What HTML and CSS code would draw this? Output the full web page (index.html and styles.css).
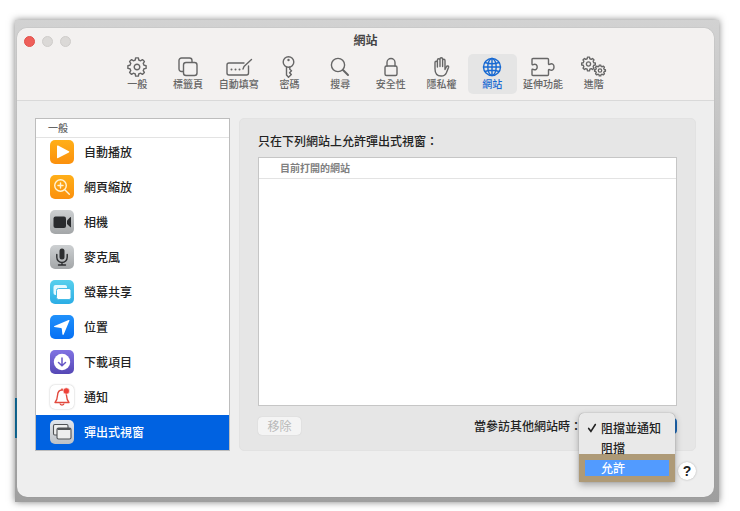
FILE: index.html
```html
<!DOCTYPE html>
<html lang="zh-Hant">
<head>
<meta charset="utf-8">
<meta name="viewport" content="width=device-width, initial-scale=1">
<title>網站</title>
<link rel="stylesheet" href="styles.css">
</head>
<body>
<svg class="defs" width="0" height="0" aria-hidden="true">
  <defs>
    <path id="gear" d="M7 -1.7 L9.1 -1.4 V1.4 L7 1.7 L6.2 3.7 L7.4 5.4 L5.4 7.4 L3.7 6.2 L1.7 7 L1.4 9.1 H-1.4 L-1.7 7 L-3.7 6.2 L-5.4 7.4 L-7.4 5.4 L-6.2 3.7 L-7 1.7 L-9.1 1.4 V-1.4 L-7 -1.7 L-6.2 -3.7 L-7.4 -5.4 L-5.4 -7.4 L-3.7 -6.2 L-1.7 -7 L-1.4 -9.1 H1.4 L1.7 -7 L3.7 -6.2 L5.4 -7.4 L7.4 -5.4 L6.2 -3.7 Z"/>
  </defs>
</svg>
<div class="backdrop">
  <main class="window">
    <header class="titlebar">
      <div class="title-row">
        <div class="lights">
          <button class="light close" aria-label="關閉"></button>
          <button class="light" aria-label="縮到最小"></button>
          <button class="light" aria-label="縮放"></button>
        </div>
        <h1 class="title">網站</h1>
      </div>
      <nav class="toolbar">
        <button class="tool">
          <svg class="tool-icon" viewBox="-14 -11 28 22"><use href="#gear"/><circle r="2.8"/></svg>
          <span>一般</span>
        </button>
        <button class="tool">
          <svg class="tool-icon" viewBox="0 0 28 22"><path d="M9 15.500H7.500a2.500 2.500 0 0 1-2.500-2.500V4.500a2.500 2.500 0 0 1 2.500-2.500h8A2.500 2.500 0 0 1 18 4.500v1.500"/><rect x="9.500" y="6.500" width="13.500" height="13" rx="2.500"/></svg>
          <span>標籤頁</span>
        </button>
        <button class="tool">
          <svg class="tool-icon" viewBox="0 0 28 22"><path d="M19 7H4a2 2 0 0 0-2 2v8a2 2 0 0 0 2 2h17.500a2 2 0 0 0 2-2V10"/><path d="M18 13l1-2.500 7.500-7"/><path class="dots" d="M6.500 13.500h0M10.500 13.500h0M14.500 13.500h0"/></svg>
          <span>自動填寫</span>
        </button>
        <button class="tool">
          <svg class="tool-icon" viewBox="0 0 28 22"><circle cx="13.500" cy="6" r="5.300"/><circle class="fill" cx="13.500" cy="4" r="1.200"/><path d="M11.500 11v8l2 2.300 2.800-2.800-1.700-1.800 1.900-2-1.700-1.500V11"/></svg>
          <span>密碼</span>
        </button>
        <button class="tool">
          <svg class="tool-icon" viewBox="0 0 28 22"><circle cx="12" cy="9" r="6.600"/><path class="thick" d="M17 14l5 5"/></svg>
          <span>搜尋</span>
        </button>
        <button class="tool">
          <svg class="tool-icon" viewBox="0 0 28 22"><rect x="8" y="10" width="12" height="9.500" rx="1.500"/><path d="M10 10V6.500a4 4 0 0 1 8 0V10"/></svg>
          <span>安全性</span>
        </button>
        <button class="tool">
          <svg class="tool-icon" viewBox="0 0 28 22"><path d="M7 13V6.500a1.200 1.200 0 0 1 2.400 0V11 4a1.300 1.300 0 0 1 2.600 0v6.500V3a1.300 1.300 0 0 1 2.600 0V10.500 4.500a1.200 1.200 0 0 1 2.400 0V13.500l1.400-2.800c.6-1.300 2.600-.8 2.200.6l-2.200 5.400c-1 2.300-2.700 3.300-5.200 3.300-4 0-6.200-2.500-6.200-7z"/></svg>
          <span>隱私權</span>
        </button>
        <button class="tool selected" aria-current="page">
          <svg class="tool-icon" viewBox="0 0 28 22"><circle cx="14" cy="11" r="8.500"/><ellipse cx="14" cy="11" rx="4.200" ry="8.500"/><path d="M14 2.500v17M5.500 11h17M7 6.500c4 1.500 10 1.500 14 0M7 15.500c4-1.500 10-1.500 14 0"/></svg>
          <span>網站</span>
        </button>
        <button class="tool">
          <svg class="tool-icon" viewBox="0 0 28 22"><path d="M4 2.500h14.500q1 0 1 1v4.200q0 1 1 .7c3-1.500 4.500.2 4.500 2.600s-1.500 4.100-4.500 2.600q-1-.3-1 .7v4.200q0 1-1 1H4q-1 0-1-1V14q0-1.200 1.200-.6c2.500 1.200 4-.4 4-2.400s-1.500-3.600-4-2.400Q3 9.200 3 8V3.500q0-1 1-1z"/></svg>
          <span>延伸功能</span>
        </button>
        <button class="tool">
          <svg class="tool-icon" viewBox="0 0 28 22"><g transform="translate(8.500 8) scale(.75)" stroke-width="1.800"><use href="#gear"/><circle r="2.800"/></g><g transform="translate(20 14.500) scale(.6)" stroke-width="2.200"><use href="#gear"/><circle r="2.800"/></g></svg>
          <span>進階</span>
        </button>
      </nav>
    </header>

    <div class="content">
      <aside class="sidebar">
        <h2 class="sidebar-head">一般</h2>
        <ul class="list">
          <li class="item"><span class="app orange"><svg viewBox="0 0 24 24"><path fill="#fff" d="M7 6.200q0-1.200 1.100-.6l10.800 5.600q1 .6 0 1.200L8.100 18q-1.100.6-1.100-.6z"/></svg></span>自動播放</li>
          <li class="item"><span class="app orange"><svg viewBox="0 0 24 24" fill="none" stroke="#fff4d6" stroke-width="1.400" stroke-linecap="round"><circle cx="10.500" cy="10.500" r="5.800"/><path d="M15 15l4.300 4.300M8 10.500h5M10.500 8v5"/></svg></span>網頁縮放</li>
          <li class="item"><span class="app gray"><svg viewBox="0 0 24 24" fill="#292b2e"><rect x="3.500" y="6.500" width="12.500" height="11.500" rx="2"/><path d="M17 10.500l3.200-3.200q.8-.6.800.4v9q0 1-.8.400L17 14z"/></svg></span>相機</li>
          <li class="item"><span class="app gray"><svg viewBox="0 0 24 24" fill="none" stroke="#2c2e30" stroke-width="1.400" stroke-linecap="round"><rect x="9.500" y="3.500" width="5" height="11" rx="2.500" fill="#2c2e30" stroke="none"/><path d="M6.800 9.500v2.800a5.200 5.200 0 0 0 10.400 0V9.500M12 17.500V20M8.500 20h7"/></svg></span>麥克風</li>
          <li class="item"><span class="app cyan"><svg viewBox="0 0 24 24"><rect x="3.500" y="5" width="13.500" height="10" rx="2" fill="#e5f9ff"/><rect x="6.500" y="8.500" width="14.500" height="11" rx="2" fill="#fff" stroke="#45bce7"/></svg></span>螢幕共享</li>
          <li class="item"><span class="app blue"><svg viewBox="0 0 24 24"><path fill="#fff" d="M4.300 12.100q-1-.7.200-1.200L18.600 5q1.200-.4.800.8l-5.600 13.500q-.8 1.200-1.400 0l-.6-5.500q0-.8-.9-.9z"/></svg></span>位置</li>
          <li class="item"><span class="app purple"><svg viewBox="0 0 24 24"><circle cx="12" cy="12" r="8.200" fill="#fff"/><path d="M12 8v7.500M8.500 12.500l3.500 3.200 3.500-3.200" fill="none" stroke="#6655c5" stroke-width="1.500" stroke-linecap="round"/></svg></span>下載項目</li>
          <li class="item"><span class="app white"><svg viewBox="0 0 24 24" fill="none" stroke="#e24a3e" stroke-width="1.400" stroke-linejoin="round"><path d="M5 17.500c2-2 2.300-3.500 2.500-7 .2-3.600 1.800-5.500 4.500-5.500s4.300 2 4.500 5.500c.2 3.500.5 5 2.500 7z"/><path d="M10 18.500c.3 2 3.700 2 4 0M12 5V3.500"/><circle cx="16.300" cy="6" r="3.200" fill="#ed4138" stroke="#fff" stroke-width=".6"/></svg></span>通知</li>
          <li class="item active"><span class="app silver"><svg viewBox="0 0 24 24" fill="#eee" stroke="#505255" stroke-width="1.100"><path d="M7 15H4.800Q3.500 15 3.500 13.500V6q0-1.500 1.300-1.500h12Q18 4.500 18 6v2"/><rect x="7" y="8" width="14" height="11" rx="1.500"/><path d="M7.500 9h13" stroke-width="2"/></svg></span>彈出式視窗</li>
        </ul>
      </aside>

      <section class="panel">
        <h2 class="panel-title">只在下列網站上允許彈出式視窗：</h2>
        <div class="sites"><h3 class="sites-head">目前打開的網站</h3></div>
        <div class="controls">
          <button class="remove" disabled>移除</button>
          <div class="policy">
            <label for="policy">當參訪其他網站時：</label>
            <div class="picker">
              <select id="policy" class="select"><option>阻擋並通知</option><option>阻擋</option><option>允許</option></select>
              <div class="menu" role="listbox" aria-label="當參訪其他網站時">
                <div class="option" role="option" aria-selected="true"><svg class="check" viewBox="0 0 12 12"><path d="M2 6.500L4.700 10 10 1.800" fill="none" stroke="#222" stroke-width="1.900" stroke-linecap="round"/></svg>阻擋並通知</div>
                <div class="option" role="option" aria-selected="false">阻擋</div>
                <div class="highlight"><div class="option hover" role="option" aria-selected="false">允許</div></div>
              </div>
            </div>
          </div>
        </div>
      </section>
    </div>
    <footer class="footer"><button class="help" aria-label="輔助說明">?</button></footer>
  </main>
</div>
</body>
</html>
```
FILE: styles.css
```css
* {
  box-sizing: border-box;
}

body {
  margin: 0;
  min-height: 100vh;
  padding: 20px 21px 9px 15px;
  display: flex;
  background: #fff;
  color: #222;
  font-family: "Noto Sans CJK TC", "Liberation Sans", sans-serif;
  font-size: 12px;
  line-height: 18px;
}

h1, h2, h3, ul {
  margin: 0;
  padding: 0;
}

button {
  padding: 0;
  border: 0;
  font: inherit;
  color: inherit;
}

.defs {
  position: absolute;
}

.backdrop {
  flex: 1;
  display: flex;
  padding: 8px 5px 5px 2px;
  background:
    linear-gradient(transparent 378px, #08608c 378px, #08608c 418px, transparent 418px) left / 2px 100% no-repeat,
    linear-gradient(#d2d2d2, #bcbcbc 35%, #9f9f9f);
  box-shadow: 0 0 7px rgba(0, 0, 0, .5);
}

.window {
  flex: 1;
  display: flex;
  flex-direction: column;
  border-radius: 10px;
  background: #eee;
  box-shadow: 0 0 1px #888;
}

.titlebar {
  height: 73px;
  border-bottom: 1px solid #d9d9d9;
  border-radius: 10px 10px 0 0;
  background: #f3f1f0;
}

.title-row {
  display: grid;
  grid-template-columns: 1fr auto 1fr;
  align-items: center;
  height: 26px;
  padding: 0 7px;
}

.lights {
  display: flex;
  gap: 7px;
}

.light {
  width: 11px;
  height: 11px;
  border: 1px solid #cfcdcb;
  border-radius: 50%;
  background: #dbd9d7;
}

.close {
  border-color: #e2504a;
  background: #ee5f5a;
}

.title {
  font-size: 12px;
  font-weight: 700;
  line-height: 16px;
  padding-bottom: 2px;
  color: #444;
}

.toolbar {
  display: grid;
  grid-template-columns: repeat(10, 1fr);
  justify-items: center;
  max-width: 507px;
  margin: 0 auto;
}

.tool {
  display: flex;
  flex-direction: column;
  align-items: center;
  width: 49px;
  height: 40px;
  padding-top: 2px;
  border-radius: 5px;
  background: none;
  color: #666;
  font-size: 10px;
  font-weight: 500;
  line-height: 12px;
  white-space: nowrap;
}

.selected {
  background: #e5e5e5;
  color: #1769d2;
}

.tool-icon {
  width: 28px;
  height: 22px;
  fill: none;
  stroke: currentColor;
  stroke-width: 1.4;
  stroke-linejoin: round;
  stroke-linecap: round;
}

.tool-icon .dots {
  stroke-width: 2;
}

.tool-icon .thick {
  stroke-width: 2;
}

.tool-icon .fill {
  fill: currentColor;
  stroke: none;
}

.content {
  flex: 1;
  display: grid;
  grid-template-columns: 195px 1fr;
  gap: 9px;
  padding: 17px 18px 0;
}

.sidebar {
  border: 1px solid #bdbdbd;
  background: #fff;
  overflow: hidden;
}

.sidebar-head {
  height: 19px;
  padding-left: 12px;
  border-bottom: 1px solid #e3e3e3;
  color: #666;
  font-size: 10px;
  font-weight: 500;
}

.list {
  margin-top: -3px;
  list-style: none;
}

.item {
  display: flex;
  align-items: center;
  gap: 10px;
  height: 35px;
  padding: 0 14px 2px;
  font-weight: 500;
}

.active {
  background: #0062e1;
  color: #fff;
}

.app {
  display: flex;
  width: 24px;
  height: 24px;
  border-radius: 5px;
}

.app svg {
  width: 24px;
  height: 24px;
}

.orange {
  background: linear-gradient(#ffaf18, #fb900d);
}

.gray {
  background: linear-gradient(#cdd0d2, #a3a6a8);
}

.cyan {
  background: linear-gradient(#58d0ed, #2bade5);
}

.blue {
  background: linear-gradient(#2091fb, #0670f4);
}

.purple {
  background: linear-gradient(#8173e3, #5547b5);
}

.white {
  background: #fff;
  box-shadow: 0 0 2px #bbb;
}

.silver {
  background: linear-gradient(#e3e7ed, #bdc1c6);
}

.panel {
  display: flex;
  flex-direction: column;
  padding: 13px 18px 15px;
  border: 1px solid #e2e2e2;
  border-radius: 5px;
  background: #e6e6e6;
}

.panel-title {
  margin-bottom: 7px;
  font-size: 12px;
  font-weight: 500;
}

.sites {
  flex: 1;
  border: 1px solid #c6c6c6;
  background: #fff;
}

.sites-head {
  height: 21px;
  padding-left: 21px;
  border-bottom: 1px solid #e3e3e3;
  color: #808080;
  font-size: 10px;
  font-weight: 700;
  line-height: 20px;
}

.controls {
  display: flex;
  align-items: center;
  justify-content: space-between;
  height: 18px;
  margin-top: 11px;
}

.remove {
  width: 43px;
  height: 18px;
  border-radius: 4px;
  background: #f4f4f4;
  box-shadow: 0 0 1px #bbb;
  color: #b9b9b9;
}

.policy {
  display: flex;
  align-items: center;
  font-weight: 500;
}

.picker {
  position: relative;
  width: 95px;
}

.select {
  display: block;
  appearance: none;
  width: 100%;
  height: 16px;
  padding: 0 6px;
  border: 0;
  border-radius: 4px;
  background: linear-gradient(to left, #1664b4 16px, #fff 16px);
  font: inherit;
  line-height: 16px;
}

.menu {
  position: absolute;
  top: -5px;
  right: 2px;
  width: 96px;
  padding-top: 5px;
  border-radius: 5px 5px 2px 2px;
  background: #e9e9e9;
  box-shadow: 0 0 1px #777, 0 3px 7px rgba(0, 0, 0, .3);
}

.option {
  position: relative;
  height: 20px;
  padding-left: 22px;
  line-height: 20px;
}

.menu > .option:nth-child(2) {
  height: 16px;
}

.check {
  position: absolute;
  top: 5px;
  left: 8px;
  width: 10px;
  height: 10px;
}

.highlight {
  padding: 6px;
  background: #ae9a77;
}

.hover {
  height: 16px;
  padding-left: 16px;
  background: #529bff;
  color: #fff;
  line-height: 16px;
}

.footer {
  display: flex;
  justify-content: flex-end;
  padding: 11px 18px 17px;
}

.help {
  width: 18px;
  height: 18px;
  border-radius: 50%;
  background: #fff;
  box-shadow: 0 0 2px #aaa;
  font-family: "Liberation Sans", sans-serif;
  font-size: 14px;
  font-weight: 700;
  line-height: 18px;
}
```
